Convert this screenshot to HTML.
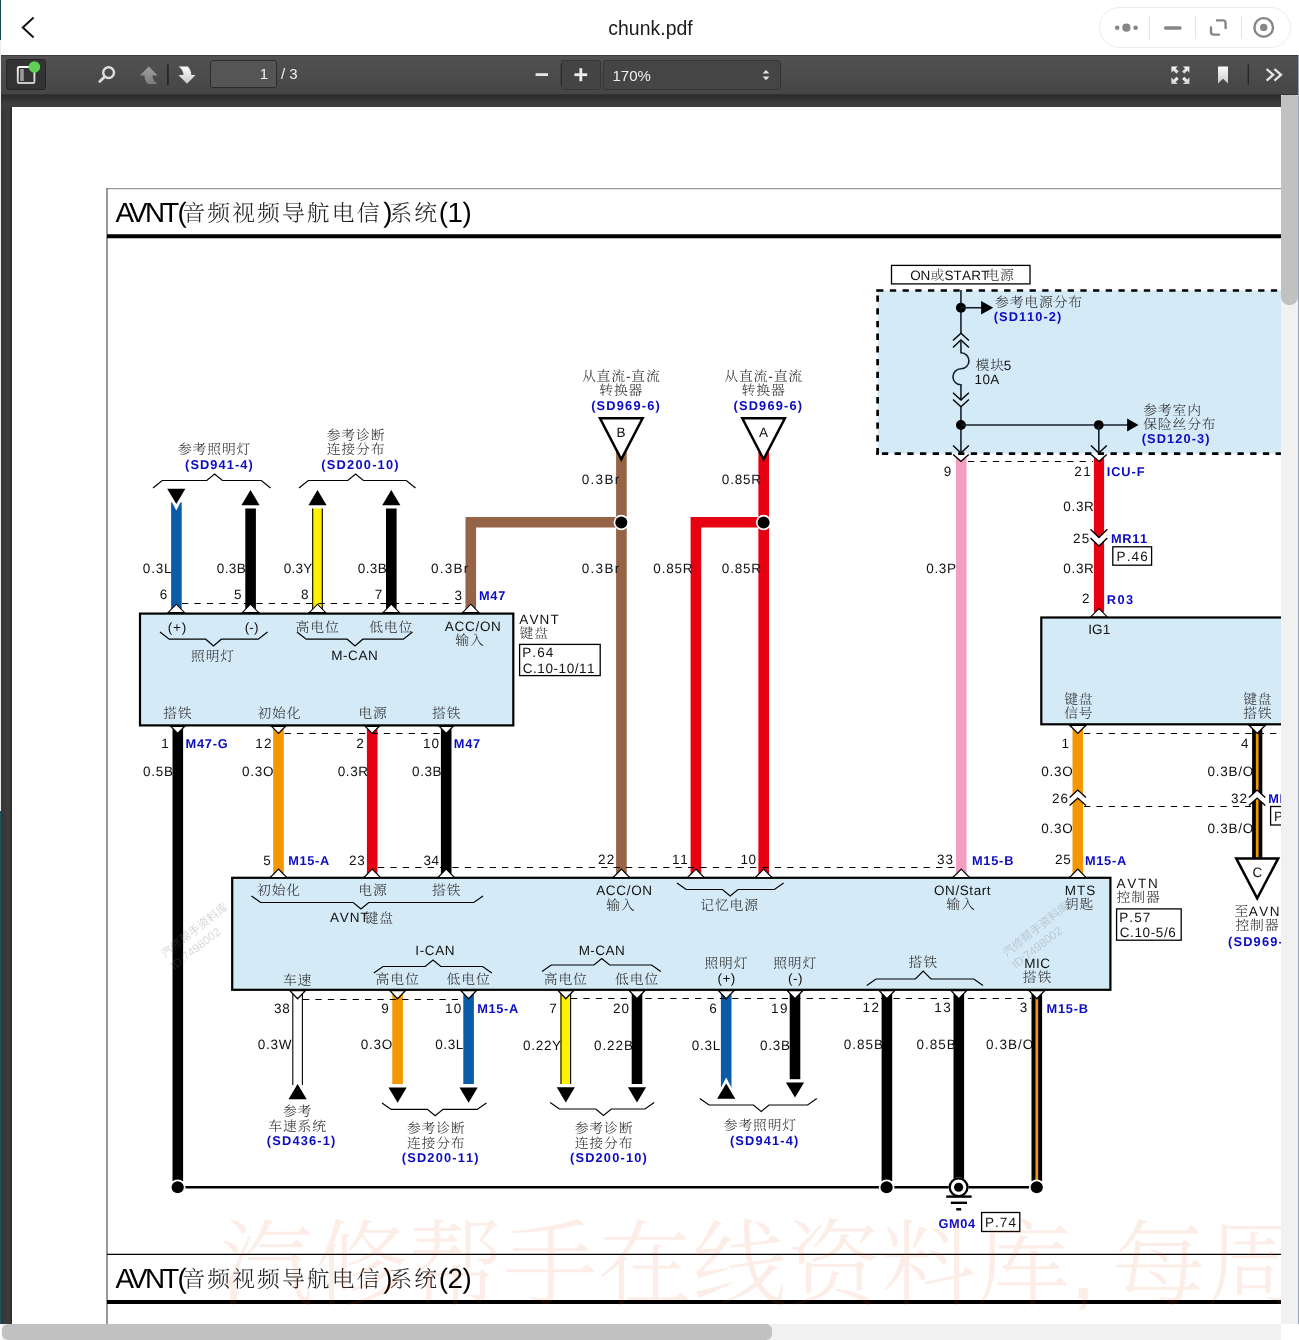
<!DOCTYPE html>
<html lang="zh-CN"><head><meta charset="utf-8"><title>chunk.pdf</title>
<style>
*{box-sizing:border-box}
html,body{margin:0;padding:0;background:#fff;width:1299px;height:1340px;overflow:hidden}
#root{position:absolute;left:0;top:0;width:1299px;height:1340px;will-change:transform;transform:translateZ(0)}
body{position:relative;font-family:"Liberation Sans", "Noto Sans CJK SC", sans-serif}
.abs{position:absolute}
#viewer{left:0;top:55px;width:1281px;height:1269px;background:linear-gradient(90deg,#353535 0,#3d3d3d 9px,#2c2c2c 12px,#2c2c2c)}
#edge{left:0;top:0;width:1px;height:1324px;background:linear-gradient(#1b4a56 0,#1b4a56 40px,#ececec 40px,#ececec 811px,#1e5560 811px)}
#page{left:12px;top:107px;width:1269px;height:1217px;background:#fff;overflow:hidden}
#page svg{position:absolute;left:-12px;top:-107px}
#shade{left:1px;top:95px;width:1280px;height:12px;background:linear-gradient(#2b2b2b,#3a3a3a 60%,#3f3f3f)}
#shade2{left:12px;top:105px;width:1269px;height:2px;background:linear-gradient(#3d3d3d,#1e1e1e)}
#tb{left:1px;top:55px;width:1298px;height:40px;background:linear-gradient(#515151,#464646);border-top:1px solid #3a3a3a;border-bottom:1px solid #343434}
#hdr{left:0;top:0;width:1299px;height:55px;background:#fff}
#ttl{left:1px;top:0.6px;width:1299px;text-align:center;font-size:19.4px;line-height:55px;color:#1a1a1a;letter-spacing:.05px}
#pill{left:1099px;top:7px;width:192px;height:41px;border:1px solid #ebebeb;border-radius:21px;background:#fff}
#vsb{left:1281px;top:95px;width:17px;height:1229px;background:#f1f1f1}
#vth{left:1281px;top:95px;width:17px;height:210px;background:#c1c1c1;border-radius:3px 3px 8px 8px}
#hsb{left:1px;top:1324px;width:1280px;height:16px;background:#f1f1f1}
#hth{left:2px;top:1324px;width:770px;height:16px;background:#c1c1c1;border-radius:6px}
#rstrip{left:1298px;top:55px;width:1px;height:1269px;background:#9fa3b0}
.tbtn{border:1px solid #2e2e2e;border-radius:2.5px;background:#3c3c3c}
.tbt{color:#f0f0f0;font-size:15px;line-height:16px;white-space:nowrap}
svg text{white-space:pre;text-rendering:geometricPrecision}
.l{font-family:"Liberation Sans", "Noto Sans CJK SC", sans-serif;font-size:13.5px;fill:#111;font-kerning:none}
.b{font-family:"Liberation Sans", "Noto Sans CJK SC", sans-serif;font-size:12.8px;font-weight:700;fill:#0c0cc2;font-kerning:none}
.c{font-family:"Liberation Sans", "Noto Serif CJK SC", serif;font-size:13.8px;font-weight:300;fill:#2a2a2a;letter-spacing:.85px}
.tl{font-family:"Liberation Sans", "Noto Sans CJK SC", sans-serif;font-size:27.8px;fill:#000}
.tc{font-family:"Liberation Sans", "Noto Serif CJK SC", serif;font-size:22.8px;font-weight:300;fill:#222;letter-spacing:2.1px}
.wm{font-family:"Liberation Sans", "Noto Serif CJK SC", serif;font-size:94.6px;font-weight:300;fill:#eb5514;opacity:.1}
.wms{font-family:"Liberation Sans","Noto Sans CJK SC",sans-serif;font-size:11.6px;fill:#707070;opacity:.28}
</style></head>
<body><div id="root">
<div id="viewer" class="abs"></div>
<div id="page" class="abs">
<svg width="1299" height="1340" viewBox="0 0 1299 1340">
<line x1="107.00" y1="188.70" x2="1282.00" y2="188.70" stroke="#9a9a9a" stroke-width="1.3" />
<line x1="107.00" y1="188.00" x2="107.00" y2="1330.00" stroke="#555" stroke-width="1.2" />
<line x1="107.00" y1="236.20" x2="1282.00" y2="236.20" stroke="#000" stroke-width="4" />
<line x1="107.00" y1="1254.40" x2="1282.00" y2="1254.40" stroke="#000" stroke-width="1.2" />
<line x1="107.00" y1="1302.00" x2="1282.00" y2="1302.00" stroke="#000" stroke-width="4" />
<rect x="877.60" y="290.50" width="422.40" height="163.20" fill="#d4eaf7" stroke="none" stroke-width="1" />
<rect x="140.00" y="613.60" width="373.30" height="111.80" fill="#d4eaf7" stroke="#000" stroke-width="2.2" />
<rect x="232.20" y="877.80" width="878.20" height="112.00" fill="#d4eaf7" stroke="#000" stroke-width="2.2" />
<rect x="1041.30" y="617.50" width="258.70" height="106.80" fill="#d4eaf7" stroke="#000" stroke-width="2.2" />
<rect x="171.10" y="502.40" width="10.60" height="107.60" fill="#0a5ca8" stroke="none" stroke-width="1" />
<polygon points="164.60,487.60 188.00,487.60 176.30,510.60" fill="#fff" stroke="none" stroke-width="1" />
<polygon points="167.20,488.80 185.40,488.80 176.30,504.00" fill="#000" stroke="none" stroke-width="1" />
<rect x="245.30" y="508.50" width="10.60" height="101.50" fill="#000" stroke="none" stroke-width="1" />
<polygon points="250.50,490.00 259.60,505.20 241.40,505.20" fill="#000" stroke="none" stroke-width="1" />
<rect x="312.20" y="508.50" width="10.60" height="101.50" fill="#fff100" stroke="none" stroke-width="1" />
<line x1="312.70" y1="508.50" x2="312.70" y2="610.00" stroke="#000" stroke-width="1.1" />
<line x1="322.30" y1="508.50" x2="322.30" y2="610.00" stroke="#000" stroke-width="1.1" />
<polygon points="317.50,490.00 326.60,505.20 308.40,505.20" fill="#000" stroke="none" stroke-width="1" />
<rect x="386.00" y="508.50" width="10.60" height="101.50" fill="#000" stroke="none" stroke-width="1" />
<polygon points="391.30,490.00 400.40,505.20 382.20,505.20" fill="#000" stroke="none" stroke-width="1" />
<path d="M470.8 610 V522.3 H621.4" fill="none" stroke="#956345" stroke-width="10.6"/>
<rect x="616.10" y="446.00" width="10.60" height="428.00" fill="#956345" stroke="none" stroke-width="1" />
<path d="M695.9 874 V522.3 H763.7" fill="none" stroke="#e60012" stroke-width="10.6"/>
<rect x="758.40" y="446.00" width="10.60" height="428.00" fill="#e60012" stroke="none" stroke-width="1" />
<rect x="955.95" y="455.00" width="10.60" height="419.00" fill="#f19ec2" stroke="none" stroke-width="1" />
<rect x="1093.90" y="455.00" width="10.20" height="157.00" fill="#e60012" stroke="none" stroke-width="1" />
<circle cx="621.30" cy="522.50" r="7.7" fill="#fff" stroke="none" stroke-width="1"/>
<circle cx="621.30" cy="522.50" r="6.0" fill="#000" stroke="none" stroke-width="1"/>
<circle cx="763.60" cy="522.50" r="7.7" fill="#fff" stroke="none" stroke-width="1"/>
<circle cx="763.60" cy="522.50" r="6.0" fill="#000" stroke="none" stroke-width="1"/>
<polygon points="952.75,453.60 969.15,453.60 960.95,461.30" fill="#fff" stroke="none" stroke-width="1" />
<polyline points="953.15,454.40 960.95,461.40 968.75,454.40" fill="none" stroke="#000" stroke-width="1.4" />
<polygon points="1090.75,453.60 1107.15,453.60 1098.95,461.30" fill="#fff" stroke="none" stroke-width="1" />
<polyline points="1091.15,454.40 1098.95,461.40 1106.75,454.40" fill="none" stroke="#000" stroke-width="1.4" />
<line x1="182.00" y1="603.50" x2="466.00" y2="603.50" stroke="#000" stroke-width="1.2" stroke-dasharray="6.3 6.1"/>
<polygon points="168.00,612.60 176.30,604.20 184.60,612.60" fill="#fff" stroke="#000" stroke-width="1.1" stroke-linejoin="miter"/>
<polygon points="242.20,612.60 250.50,604.20 258.80,612.60" fill="#fff" stroke="#000" stroke-width="1.1" stroke-linejoin="miter"/>
<polygon points="309.20,612.60 317.50,604.20 325.80,612.60" fill="#fff" stroke="#000" stroke-width="1.1" stroke-linejoin="miter"/>
<polygon points="383.00,612.60 391.30,604.20 399.60,612.60" fill="#fff" stroke="#000" stroke-width="1.1" stroke-linejoin="miter"/>
<polygon points="462.50,612.60 470.80,604.20 479.10,612.60" fill="#fff" stroke="#000" stroke-width="1.1" stroke-linejoin="miter"/>
<path d="M876.25 290.5 H1300" fill="none" stroke="#000" stroke-width="2.7" stroke-dasharray="6.3 6.4" stroke-dashoffset="-0.9"/>
<rect x="876.25" y="289.15" width="1.35" height="2.70" fill="#000" stroke="none" stroke-width="1" />
<path d="M877.6 453.7 H1300" fill="none" stroke="#000" stroke-width="2.7" stroke-dasharray="6.3 6.4" stroke-dashoffset="8.4"/>
<rect x="876.25" y="452.35" width="2.35" height="2.70" fill="#000" stroke="none" stroke-width="1" />
<path d="M877.6 289.2 V455" fill="none" stroke="#000" stroke-width="2.7" stroke-dasharray="6.3 6.4" stroke-dashoffset="6.4"/>
<polygon points="600.00,418.30 642.60,418.30 621.30,459.40" fill="#fff" stroke="#000" stroke-width="2.5" />
<text x="616.60" y="437" class="l" style="letter-spacing:0.50px">B</text>
<polygon points="742.30,418.30 784.90,418.30 763.60,459.40" fill="#fff" stroke="#000" stroke-width="2.5" />
<text x="759.10" y="437" class="l" style="letter-spacing:0.50px">A</text>
<rect x="172.50" y="727.00" width="10.60" height="454.00" fill="#000" stroke="none" stroke-width="1" />
<rect x="1072.50" y="727.00" width="10.60" height="147.00" fill="#f39800" stroke="none" stroke-width="1" />
<rect x="1252.10" y="727.00" width="10.20" height="132.00" fill="#000" stroke="none" stroke-width="1" />
<rect x="1255.85" y="727.00" width="2.70" height="132.00" fill="#f39800" stroke="none" stroke-width="1" />
<rect x="273.20" y="727.00" width="10.60" height="147.00" fill="#f39800" stroke="none" stroke-width="1" />
<rect x="366.90" y="727.00" width="10.60" height="147.00" fill="#e60012" stroke="none" stroke-width="1" />
<rect x="440.90" y="727.00" width="10.60" height="147.00" fill="#000" stroke="none" stroke-width="1" />
<line x1="284.60" y1="733.50" x2="440.00" y2="733.50" stroke="#000" stroke-width="1.2" stroke-dasharray="6.3 6.1"/>
<polygon points="170.80,726.40 177.70,733.40 184.60,726.40" fill="#fff" stroke="#000" stroke-width="1.3" />
<polygon points="271.60,726.40 278.50,733.40 285.40,726.40" fill="#fff" stroke="#000" stroke-width="1.3" />
<polygon points="365.30,726.40 372.20,733.40 379.10,726.40" fill="#fff" stroke="#000" stroke-width="1.3" />
<polygon points="439.30,726.40 446.20,733.40 453.10,726.40" fill="#fff" stroke="#000" stroke-width="1.3" />
<line x1="378.00" y1="867.50" x2="956.00" y2="867.50" stroke="#000" stroke-width="1.2" stroke-dasharray="6.3 6.1"/>
<polygon points="270.20,877.50 278.50,869.10 286.80,877.50" fill="#fff" stroke="#000" stroke-width="1.1" stroke-linejoin="miter"/>
<polygon points="363.90,877.50 372.20,869.10 380.50,877.50" fill="#fff" stroke="#000" stroke-width="1.1" stroke-linejoin="miter"/>
<polygon points="437.90,877.50 446.20,869.10 454.50,877.50" fill="#fff" stroke="#000" stroke-width="1.1" stroke-linejoin="miter"/>
<polygon points="613.10,877.50 621.40,869.10 629.70,877.50" fill="#fff" stroke="#000" stroke-width="1.1" stroke-linejoin="miter"/>
<polygon points="687.60,877.50 695.90,869.10 704.20,877.50" fill="#fff" stroke="#000" stroke-width="1.1" stroke-linejoin="miter"/>
<polygon points="755.40,877.50 763.70,869.10 772.00,877.50" fill="#fff" stroke="#000" stroke-width="1.1" stroke-linejoin="miter"/>
<polygon points="952.90,877.50 961.20,869.10 969.50,877.50" fill="#fff" stroke="#000" stroke-width="1.1" stroke-linejoin="miter"/>
<polygon points="1069.50,877.50 1077.80,869.10 1086.10,877.50" fill="#fff" stroke="#000" stroke-width="1.1" stroke-linejoin="miter"/>
<line x1="1084.00" y1="733.50" x2="1300.00" y2="733.50" stroke="#000" stroke-width="1.2" stroke-dasharray="6.3 6.1"/>
<polygon points="1069.70,725.30 1077.80,733.40 1085.90,725.30" fill="#fff" stroke="#000" stroke-width="1.3" />
<polygon points="1249.10,725.30 1257.20,733.40 1265.30,725.30" fill="#fff" stroke="#000" stroke-width="1.3" />
<polygon points="1090.70,616.90 1099.00,608.50 1107.30,616.90" fill="#fff" stroke="#000" stroke-width="1.1" stroke-linejoin="miter"/>
<line x1="1084.00" y1="806.50" x2="1251.00" y2="806.50" stroke="#000" stroke-width="1.2" stroke-dasharray="6.3 6.1"/>
<rect x="292.30" y="991.00" width="10.60" height="94.00" fill="#fff" stroke="none" stroke-width="1" />
<line x1="292.80" y1="991.00" x2="292.80" y2="1085.00" stroke="#000" stroke-width="1.1" />
<line x1="302.40" y1="991.00" x2="302.40" y2="1085.00" stroke="#000" stroke-width="1.1" />
<polygon points="297.60,1084.00 306.70,1099.20 288.50,1099.20" fill="#000" stroke="none" stroke-width="1" />
<rect x="392.30" y="991.00" width="10.60" height="93.00" fill="#f39800" stroke="none" stroke-width="1" />
<polygon points="388.50,1087.60 406.70,1087.60 397.60,1102.80" fill="#000" stroke="none" stroke-width="1" />
<rect x="463.30" y="991.00" width="10.60" height="93.00" fill="#0a5ca8" stroke="none" stroke-width="1" />
<polygon points="459.50,1087.60 477.70,1087.60 468.60,1102.80" fill="#000" stroke="none" stroke-width="1" />
<rect x="560.50" y="991.00" width="10.60" height="93.00" fill="#fff100" stroke="none" stroke-width="1" />
<line x1="561.00" y1="991.00" x2="561.00" y2="1084.00" stroke="#000" stroke-width="1.1" />
<line x1="570.60" y1="991.00" x2="570.60" y2="1084.00" stroke="#000" stroke-width="1.1" />
<polygon points="556.70,1087.30 574.90,1087.30 565.80,1102.50" fill="#000" stroke="none" stroke-width="1" />
<rect x="631.70" y="991.00" width="10.60" height="93.00" fill="#000" stroke="none" stroke-width="1" />
<polygon points="627.90,1087.30 646.10,1087.30 637.00,1102.50" fill="#000" stroke="none" stroke-width="1" />
<rect x="720.90" y="991.00" width="10.60" height="105.00" fill="#0a5ca8" stroke="none" stroke-width="1" />
<polygon points="726.20,1077.50 737.60,1099.60 714.80,1099.60" fill="#fff" stroke="none" stroke-width="1" />
<polygon points="726.20,1083.60 735.30,1098.80 717.10,1098.80" fill="#000" stroke="none" stroke-width="1" />
<rect x="789.70" y="991.00" width="10.60" height="88.20" fill="#000" stroke="none" stroke-width="1" />
<polygon points="785.90,1082.40 804.10,1082.40 795.00,1097.60" fill="#000" stroke="none" stroke-width="1" />
<rect x="881.60" y="991.00" width="10.60" height="190.00" fill="#000" stroke="none" stroke-width="1" />
<rect x="953.50" y="991.00" width="10.60" height="190.00" fill="#000" stroke="none" stroke-width="1" />
<rect x="1031.50" y="991.00" width="10.60" height="190.00" fill="#000" stroke="none" stroke-width="1" />
<rect x="1035.45" y="991.00" width="2.70" height="190.00" fill="#f39800" stroke="none" stroke-width="1" />
<line x1="303.00" y1="999.50" x2="463.00" y2="999.50" stroke="#000" stroke-width="1.2" stroke-dasharray="6.3 6.1"/>
<line x1="571.00" y1="998.50" x2="1031.00" y2="998.50" stroke="#000" stroke-width="1.2" stroke-dasharray="6.3 6.1"/>
<polygon points="289.80,990.60 297.60,998.70 305.40,990.60" fill="#fff" stroke="#000" stroke-width="1.3" />
<polygon points="389.80,990.60 397.60,998.70 405.40,990.60" fill="#fff" stroke="#000" stroke-width="1.3" />
<polygon points="460.80,990.60 468.60,998.70 476.40,990.60" fill="#fff" stroke="#000" stroke-width="1.3" />
<polygon points="558.00,990.60 565.80,998.70 573.60,990.60" fill="#fff" stroke="#000" stroke-width="1.3" />
<polygon points="629.20,990.60 637.00,998.70 644.80,990.60" fill="#fff" stroke="#000" stroke-width="1.3" />
<polygon points="718.40,990.60 726.20,998.70 734.00,990.60" fill="#fff" stroke="#000" stroke-width="1.3" />
<polygon points="787.20,990.60 795.00,998.70 802.80,990.60" fill="#fff" stroke="#000" stroke-width="1.3" />
<polygon points="879.10,990.60 886.90,998.70 894.70,990.60" fill="#fff" stroke="#000" stroke-width="1.3" />
<polygon points="951.00,990.60 958.80,998.70 966.60,990.60" fill="#fff" stroke="#000" stroke-width="1.3" />
<polygon points="1029.00,990.60 1036.80,998.70 1044.60,990.60" fill="#fff" stroke="#000" stroke-width="1.3" />
<line x1="177.60" y1="1187.25" x2="1036.60" y2="1187.25" stroke="#000" stroke-width="2.4" />
<circle cx="177.70" cy="1187.25" r="7.8" fill="#fff" stroke="none" stroke-width="1"/>
<circle cx="177.70" cy="1187.25" r="6.1" fill="#000" stroke="none" stroke-width="1"/>
<circle cx="886.60" cy="1187.25" r="7.8" fill="#fff" stroke="none" stroke-width="1"/>
<circle cx="886.60" cy="1187.25" r="6.1" fill="#000" stroke="none" stroke-width="1"/>
<circle cx="1036.75" cy="1187.25" r="7.8" fill="#fff" stroke="none" stroke-width="1"/>
<circle cx="1036.75" cy="1187.25" r="6.1" fill="#000" stroke="none" stroke-width="1"/>
<circle cx="958.60" cy="1187.25" r="10.0" fill="#fff" stroke="none" stroke-width="1"/>
<circle cx="958.60" cy="1187.25" r="8.9" fill="#fff" stroke="#000" stroke-width="2.3"/>
<circle cx="958.60" cy="1187.25" r="4.6" fill="#000" stroke="none" stroke-width="1"/>
<line x1="946.20" y1="1196.60" x2="971.60" y2="1196.60" stroke="#000" stroke-width="2.4" />
<line x1="950.80" y1="1202.80" x2="967.00" y2="1202.80" stroke="#000" stroke-width="2.4" />
<line x1="956.20" y1="1209.30" x2="961.20" y2="1209.30" stroke="#000" stroke-width="2.4" />
<line x1="960.95" y1="290.00" x2="960.95" y2="333.40" stroke="#16222c" stroke-width="1.6" />
<circle cx="960.95" cy="307.75" r="5.0" fill="#000" stroke="none" stroke-width="1"/>
<line x1="960.95" y1="307.75" x2="982.00" y2="307.75" stroke="#16222c" stroke-width="1.6" />
<polygon points="981.10,301.00 993.20,307.75 981.10,314.50" fill="#000" stroke="none" stroke-width="1" />
<polyline points="953.00,340.60 960.95,333.20 968.90,340.60" fill="none" stroke="#000" stroke-width="1.4" />
<polyline points="953.00,347.40 960.95,339.90 968.90,347.40" fill="none" stroke="#000" stroke-width="1.4" />
<path d="M960.95 340 V352.8 a8 8 0 0 1 0 16 a8 8 0 0 0 0 16 V400" fill="none" stroke="#16222c" stroke-width="1.6"/>
<polyline points="953.00,392.70 960.95,400.10 968.90,392.70" fill="none" stroke="#000" stroke-width="1.4" />
<polyline points="953.00,399.40 960.95,406.80 968.90,399.40" fill="none" stroke="#000" stroke-width="1.4" />
<line x1="960.95" y1="406.60" x2="960.95" y2="453.00" stroke="#16222c" stroke-width="1.6" />
<circle cx="960.95" cy="425.05" r="5.0" fill="#000" stroke="none" stroke-width="1"/>
<line x1="960.95" y1="425.05" x2="1128.00" y2="425.05" stroke="#16222c" stroke-width="1.6" />
<circle cx="1098.70" cy="425.05" r="4.9" fill="#000" stroke="none" stroke-width="1"/>
<polygon points="1127.10,418.50 1138.50,425.05 1127.10,431.60" fill="#000" stroke="none" stroke-width="1" />
<line x1="1098.80" y1="425.05" x2="1098.80" y2="453.00" stroke="#16222c" stroke-width="1.6" />
<polyline points="953.05,445.60 960.95,453.00 968.85,445.60" fill="none" stroke="#000" stroke-width="1.4" />
<polyline points="1090.95,445.60 1098.85,453.00 1106.75,445.60" fill="none" stroke="#000" stroke-width="1.4" />
<line x1="968.00" y1="461.50" x2="1093.00" y2="461.50" stroke="#000" stroke-width="1.2" stroke-dasharray="6.3 6.1"/>
<rect x="891.50" y="265.40" width="138.50" height="18.50" fill="#fff" stroke="#000" stroke-width="1.3" />
<polygon points="1090.30,529.30 1098.90,537.50 1107.50,529.30 1107.50,538.10 1098.90,546.10 1090.30,538.10" fill="#fff" stroke="none" stroke-width="1" />
<polyline points="1090.50,529.30 1098.90,537.50 1107.30,529.30" fill="none" stroke="#000" stroke-width="1.4" />
<polyline points="1090.50,538.10 1098.90,546.10 1107.30,538.10" fill="none" stroke="#000" stroke-width="1.4" />
<polygon points="1069.50,805.70 1077.80,798.10 1086.10,805.70 1086.10,797.60 1077.80,790.10 1069.50,797.60" fill="#fff" stroke="none" stroke-width="1" />
<polyline points="1069.60,805.60 1077.80,798.10 1086.00,805.60" fill="none" stroke="#000" stroke-width="1.4" />
<polyline points="1069.60,797.50 1077.80,790.10 1086.00,797.50" fill="none" stroke="#000" stroke-width="1.4" />
<polygon points="1248.80,805.70 1257.10,798.10 1265.40,805.70 1265.40,797.60 1257.10,790.10 1248.80,797.60" fill="#fff" stroke="none" stroke-width="1" />
<polyline points="1248.90,805.60 1257.10,798.10 1265.30,805.60" fill="none" stroke="#000" stroke-width="1.4" />
<polyline points="1248.90,797.50 1257.10,790.10 1265.30,797.50" fill="none" stroke="#000" stroke-width="1.4" />
<polygon points="1236.20,858.40 1278.20,858.40 1257.20,898.30" fill="#fff" stroke="#000" stroke-width="2.5" />
<text x="1252.44" y="877" class="l" style="letter-spacing:0.50px">C</text>
<rect x="519.60" y="644.40" width="80.60" height="31.20" fill="#fff" stroke="#000" stroke-width="1.3" />
<rect x="1112.80" y="546.80" width="38.80" height="18.40" fill="#fff" stroke="#000" stroke-width="1.3" />
<rect x="1116.60" y="908.90" width="64.60" height="31.30" fill="#fff" stroke="#000" stroke-width="1.3" />
<rect x="981.60" y="1212.50" width="38.20" height="19.00" fill="#fff" stroke="#000" stroke-width="1.3" />
<rect x="1270.60" y="806.50" width="29.40" height="18.50" fill="#fff" stroke="#000" stroke-width="1.3" />
<polyline points="153.00,488.00 162.20,480.50 206.80,480.50 214.60,474.00 222.40,480.50 261.30,480.50 270.50,488.00" fill="none" stroke="#000" stroke-width="1.2" />
<polyline points="299.00,488.00 308.20,480.50 347.80,480.50 355.60,474.00 363.40,480.50 406.30,480.50 415.50,488.00" fill="none" stroke="#000" stroke-width="1.2" />
<polyline points="160.00,632.00 169.20,639.20 205.70,639.20 213.50,646.00 221.30,639.20 258.30,639.20 267.50,632.00" fill="none" stroke="#000" stroke-width="1.2" />
<polyline points="297.00,632.00 306.20,639.20 347.20,639.20 355.00,646.00 362.80,639.20 403.30,639.20 412.50,632.00" fill="none" stroke="#000" stroke-width="1.2" />
<polyline points="251.50,896.00 260.70,902.50 353.20,902.50 361.00,909.00 368.80,902.50 473.80,902.50 483.00,896.00" fill="none" stroke="#000" stroke-width="1.2" />
<polyline points="677.00,883.00 686.20,889.50 722.40,889.50 730.20,896.00 738.00,889.50 774.40,889.50 783.60,883.00" fill="none" stroke="#000" stroke-width="1.2" />
<polyline points="373.80,973.00 383.00,966.50 425.20,966.50 433.00,960.00 440.80,966.50 482.60,966.50 491.80,973.00" fill="none" stroke="#000" stroke-width="1.2" />
<polyline points="542.00,971.50 551.20,965.00 594.00,965.00 601.80,958.60 609.60,965.00 651.60,965.00 660.80,971.50" fill="none" stroke="#000" stroke-width="1.2" />
<polyline points="866.80,985.60 876.00,979.00 915.40,979.00 923.20,971.00 931.00,979.00 973.80,979.00 983.00,985.60" fill="none" stroke="#000" stroke-width="1.2" />
<polyline points="382.00,1102.90 391.20,1109.40 427.40,1109.40 435.20,1115.80 443.00,1109.40 477.20,1109.40 486.40,1102.90" fill="none" stroke="#000" stroke-width="1.2" />
<polyline points="550.20,1102.60 559.40,1109.00 595.70,1109.00 603.50,1115.40 611.30,1109.00 645.00,1109.00 654.20,1102.60" fill="none" stroke="#000" stroke-width="1.2" />
<polyline points="699.80,1098.60 709.00,1105.00 753.40,1105.00 761.20,1111.50 769.00,1105.00 807.60,1105.00 816.80,1098.60" fill="none" stroke="#000" stroke-width="1.2" />
<text x="115.4" y="222" class="tl" style="letter-spacing:-2.75px">AVNT</text>
<text x="177.6" y="222" class="tl">(</text>
<text x="182.4" y="221.4" class="tc">音频视频导航电信</text>
<text x="383.2" y="222" class="tl">)</text>
<text x="389.4" y="221.4" class="tc">系统</text>
<text x="438.8" y="222" class="tl" style="letter-spacing:-0.5px">(1)</text>
<text x="115.4" y="1287.6" class="tl" style="letter-spacing:-2.75px">AVNT</text>
<text x="177.6" y="1287.6" class="tl">(</text>
<text x="182.4" y="1287.0" class="tc">音频视频导航电信</text>
<text x="383.2" y="1287.6" class="tl">)</text>
<text x="389.4" y="1287.0" class="tc">系统</text>
<text x="438.8" y="1287.6" class="tl" style="letter-spacing:-0.5px">(2)</text>
<text x="214.6" y="454" class="c" text-anchor="middle">参考照明灯</text>
<text x="185.06" y="469" class="b" style="letter-spacing:1.08px">(SD941-4)</text>
<text x="356.0" y="440" class="c" text-anchor="middle">参考诊断</text>
<text x="356.0" y="454" class="c" text-anchor="middle">连接分布</text>
<text x="321.36" y="469" class="b" style="letter-spacing:1.23px">(SD200-10)</text>
<text x="621.3" y="381" class="c" text-anchor="middle">从直流-直流</text>
<text x="621.3" y="395" class="c" text-anchor="middle">转换器</text>
<text x="591.16" y="410" class="b" style="letter-spacing:1.20px">(SD969-6)</text>
<text x="763.6" y="381" class="c" text-anchor="middle">从直流-直流</text>
<text x="763.6" y="395" class="c" text-anchor="middle">转换器</text>
<text x="733.46" y="410" class="b" style="letter-spacing:1.20px">(SD969-6)</text>
<text x="142.87" y="573" class="l" style="letter-spacing:0.77px">0.3L</text>
<text x="216.87" y="573" class="l" style="letter-spacing:0.36px">0.3B</text>
<text x="283.87" y="573" class="l" style="letter-spacing:0.22px">0.3Y</text>
<text x="357.87" y="573" class="l" style="letter-spacing:0.36px">0.3B</text>
<text x="430.97" y="573" class="l" style="letter-spacing:1.25px">0.3Br</text>
<text x="581.87" y="484" class="l" style="letter-spacing:1.25px">0.3Br</text>
<text x="581.87" y="573" class="l" style="letter-spacing:1.25px">0.3Br</text>
<text x="721.87" y="484" class="l" style="letter-spacing:0.78px">0.85R</text>
<text x="721.87" y="573" class="l" style="letter-spacing:0.78px">0.85R</text>
<text x="653.37" y="573" class="l" style="letter-spacing:0.78px">0.85R</text>
<text x="926.27" y="573" class="l" style="letter-spacing:0.62px">0.3P</text>
<text x="1063.27" y="511" class="l" style="letter-spacing:0.68px">0.3R</text>
<text x="1063.27" y="573" class="l" style="letter-spacing:0.68px">0.3R</text>
<text x="159.81" y="599" class="l" style="letter-spacing:0.50px">6</text>
<text x="233.96" y="599" class="l" style="letter-spacing:0.50px">5</text>
<text x="300.91" y="599" class="l" style="letter-spacing:0.50px">8</text>
<text x="374.81" y="599" class="l" style="letter-spacing:0.50px">7</text>
<text x="454.49" y="600" class="l" style="letter-spacing:0.50px">3</text>
<text x="478.94" y="600" class="b" style="letter-spacing:0.76px">M47</text>
<text x="943.77" y="476" class="l" style="letter-spacing:0.50px">9</text>
<text x="1074.32" y="476" class="l" style="letter-spacing:1.32px">21</text>
<text x="1106.74" y="476" class="b" style="letter-spacing:0.90px">ICU-F</text>
<text x="1072.92" y="543" class="l" style="letter-spacing:1.23px">25</text>
<text x="1110.94" y="543" class="b" style="letter-spacing:0.69px">MR11</text>
<text x="1116.49" y="561" class="l" style="letter-spacing:1.14px">P.46</text>
<text x="1081.92" y="603" class="l" style="letter-spacing:0.50px">2</text>
<text x="1106.84" y="604" class="b" style="letter-spacing:1.42px">R03</text>
<text x="1088.15" y="634" class="l" style="letter-spacing:0.22px">IG1</text>
<text x="167.66" y="632" class="l" style="letter-spacing:0.90px">(+)</text>
<text x="244.66" y="632" class="l" style="letter-spacing:0.19px">(-)</text>
<text x="213.0" y="661" class="c" text-anchor="middle">照明灯</text>
<text x="317.6" y="632" class="c" text-anchor="middle">高电位</text>
<text x="391.2" y="632" class="c" text-anchor="middle">低电位</text>
<text x="331.29" y="660" class="l" style="letter-spacing:0.54px">M-CAN</text>
<text x="444.77" y="631" class="l" style="letter-spacing:0.72px">ACC/ON</text>
<text x="470.0" y="645" class="c" text-anchor="middle">输入</text>
<text x="177.8" y="718" class="c" text-anchor="middle">搭铁</text>
<text x="279.4" y="718" class="c" text-anchor="middle">初始化</text>
<text x="373.0" y="718" class="c" text-anchor="middle">电源</text>
<text x="446.6" y="718" class="c" text-anchor="middle">搭铁</text>
<text x="519.37" y="624" class="l" style="letter-spacing:1.11px">AVNT</text>
<text x="519.6" y="638" class="c">键盘</text>
<text x="522.29" y="657" class="l" style="letter-spacing:1.08px">P.64</text>
<text x="522.71" y="673" class="l" style="letter-spacing:0.57px">C.10-10/11</text>
<text x="161.17" y="748" class="l" style="letter-spacing:0.50px">1</text>
<text x="185.54" y="748" class="b" style="letter-spacing:0.78px">M47-G</text>
<text x="255.37" y="748" class="l" style="letter-spacing:1.09px">12</text>
<text x="356.32" y="748" class="l" style="letter-spacing:0.50px">2</text>
<text x="422.97" y="748" class="l" style="letter-spacing:1.14px">10</text>
<text x="453.74" y="748" class="b" style="letter-spacing:0.76px">M47</text>
<text x="143.07" y="776" class="l" style="letter-spacing:0.69px">0.5B</text>
<text x="242.07" y="776" class="l" style="letter-spacing:0.70px">0.3O</text>
<text x="337.67" y="776" class="l" style="letter-spacing:0.61px">0.3R</text>
<text x="412.07" y="776" class="l" style="letter-spacing:0.56px">0.3B</text>
<text x="263.36" y="865" class="l" style="letter-spacing:0.50px">5</text>
<text x="288.14" y="865" class="b" style="letter-spacing:0.70px">M15-A</text>
<text x="348.92" y="865" class="l" style="letter-spacing:0.86px">23</text>
<text x="423.49" y="865" class="l" style="letter-spacing:0.49px">34</text>
<text x="597.92" y="864" class="l" style="letter-spacing:1.34px">22</text>
<text x="671.97" y="864" class="l" style="letter-spacing:0.67px">11</text>
<text x="740.57" y="864" class="l" style="letter-spacing:0.54px">10</text>
<text x="937.09" y="864" class="l" style="letter-spacing:0.89px">33</text>
<text x="971.94" y="865" class="b" style="letter-spacing:0.76px">M15-B</text>
<text x="1055.12" y="864" class="l" style="letter-spacing:0.63px">25</text>
<text x="1084.94" y="865" class="b" style="letter-spacing:0.70px">M15-A</text>
<text x="279.0" y="895" class="c" text-anchor="middle">初始化</text>
<text x="373.0" y="895" class="c" text-anchor="middle">电源</text>
<text x="446.6" y="895" class="c" text-anchor="middle">搭铁</text>
<text x="329.97" y="922" class="l" style="letter-spacing:0.84px">AVNT</text>
<text x="364.6" y="923" class="c">键盘</text>
<text x="596.17" y="895" class="l" style="letter-spacing:0.68px">ACC/ON</text>
<text x="620.8" y="910" class="c" text-anchor="middle">输入</text>
<text x="729.6" y="910" class="c" text-anchor="middle">记忆电源</text>
<text x="933.96" y="895" class="l" style="letter-spacing:0.59px">ON/Start</text>
<text x="961.0" y="909" class="c" text-anchor="middle">输入</text>
<text x="1064.69" y="895" class="l" style="letter-spacing:1.02px">MTS</text>
<text x="1079.6" y="909" class="c" text-anchor="middle">钥匙</text>
<text x="415.35" y="955" class="l" style="letter-spacing:0.60px">I-CAN</text>
<text x="578.69" y="955" class="l" style="letter-spacing:0.44px">M-CAN</text>
<text x="297.6" y="985" class="c" text-anchor="middle">车速</text>
<text x="397.6" y="984" class="c" text-anchor="middle">高电位</text>
<text x="468.6" y="984" class="c" text-anchor="middle">低电位</text>
<text x="565.8" y="984" class="c" text-anchor="middle">高电位</text>
<text x="637.0" y="984" class="c" text-anchor="middle">低电位</text>
<text x="726.4" y="968" class="c" text-anchor="middle">照明灯</text>
<text x="717.46" y="983" class="l" style="letter-spacing:0.50px">(+)</text>
<text x="795.2" y="968" class="c" text-anchor="middle">照明灯</text>
<text x="787.96" y="983" class="l" style="letter-spacing:0.50px">(-)</text>
<text x="923.2" y="967" class="c" text-anchor="middle">搭铁</text>
<text x="1024.23" y="968" class="l" style="letter-spacing:0.50px">MIC</text>
<text x="1037.4" y="982" class="c" text-anchor="middle">搭铁</text>
<text x="1116.57" y="888" class="l" style="letter-spacing:1.71px">AVTN</text>
<text x="1116.6" y="902" class="c">控制器</text>
<text x="1119.29" y="922" class="l" style="letter-spacing:1.07px">P.57</text>
<text x="1119.71" y="937" class="l" style="letter-spacing:0.61px">C.10-5/6</text>
<text x="1078.8" y="704" class="c" text-anchor="middle">键盘</text>
<text x="1078.8" y="718" class="c" text-anchor="middle">信号</text>
<text x="1257.8" y="704" class="c" text-anchor="middle">键盘</text>
<text x="1257.8" y="718" class="c" text-anchor="middle">搭铁</text>
<text x="1061.57" y="748" class="l" style="letter-spacing:0.50px">1</text>
<text x="1241.09" y="748" class="l" style="letter-spacing:0.50px">4</text>
<text x="1041.27" y="776" class="l" style="letter-spacing:0.70px">0.3O</text>
<text x="1207.47" y="776" class="l" style="letter-spacing:0.75px">0.3B/O</text>
<text x="1051.92" y="803" class="l" style="letter-spacing:1.06px">26</text>
<text x="1231.09" y="803" class="l" style="letter-spacing:0.98px">32</text>
<text x="1268.14" y="803" class="b" style="letter-spacing:0.69px">MR11</text>
<text x="1273.89" y="821" class="l" style="letter-spacing:1.14px">P.46</text>
<text x="1041.27" y="833" class="l" style="letter-spacing:0.70px">0.3O</text>
<text x="1207.47" y="833" class="l" style="letter-spacing:0.75px">0.3B/O</text>
<text x="1234.6" y="916" class="c">至</text>
<text x="1248.77" y="916" class="l" style="letter-spacing:1.44px">AVNT</text>
<text x="1257.4" y="930" class="c" text-anchor="middle">控制器</text>
<text x="1227.96" y="946" class="b" style="letter-spacing:1.20px">(SD969-6)</text>
<text x="910.36" y="280" class="l" style="letter-spacing:-0.31px">ON</text>
<text x="930.4" y="280" class="c">或</text>
<text x="944.39" y="280" class="l" style="letter-spacing:0.17px">START</text>
<text x="985.4" y="280" class="c">电源</text>
<text x="995.0" y="307" class="c">参考电源分布</text>
<text x="993.76" y="321" class="b" style="letter-spacing:1.05px">(SD110-2)</text>
<text x="975.6" y="370" class="c">模块</text>
<text x="1003.66" y="370" class="l" style="letter-spacing:0.50px">5</text>
<text x="974.57" y="384" class="l" style="letter-spacing:0.32px">10A</text>
<text x="1143.2" y="415" class="c">参考室内</text>
<text x="1143.2" y="429" class="c">保险丝分布</text>
<text x="1141.76" y="443" class="b" style="letter-spacing:1.10px">(SD120-3)</text>
<text x="273.89" y="1013" class="l" style="letter-spacing:0.88px">38</text>
<text x="381.37" y="1013" class="l" style="letter-spacing:0.50px">9</text>
<text x="444.97" y="1013" class="l" style="letter-spacing:1.34px">10</text>
<text x="477.14" y="1013" class="b" style="letter-spacing:0.70px">M15-A</text>
<text x="549.31" y="1013" class="l" style="letter-spacing:0.50px">7</text>
<text x="613.12" y="1013" class="l" style="letter-spacing:0.99px">20</text>
<text x="709.31" y="1013" class="l" style="letter-spacing:0.50px">6</text>
<text x="770.97" y="1013" class="l" style="letter-spacing:1.45px">19</text>
<text x="862.57" y="1012" class="l" style="letter-spacing:1.49px">12</text>
<text x="934.37" y="1012" class="l" style="letter-spacing:1.41px">13</text>
<text x="1019.69" y="1012" class="l" style="letter-spacing:0.50px">3</text>
<text x="1046.54" y="1013" class="b" style="letter-spacing:0.76px">M15-B</text>
<text x="257.87" y="1049" class="l" style="letter-spacing:0.69px">0.3W</text>
<text x="360.87" y="1049" class="l" style="letter-spacing:0.70px">0.3O</text>
<text x="435.27" y="1049" class="l" style="letter-spacing:0.57px">0.3L</text>
<text x="523.07" y="1050" class="l" style="letter-spacing:0.69px">0.22Y</text>
<text x="594.07" y="1050" class="l" style="letter-spacing:0.89px">0.22B</text>
<text x="691.87" y="1050" class="l" style="letter-spacing:0.70px">0.3L</text>
<text x="760.07" y="1050" class="l" style="letter-spacing:0.69px">0.3B</text>
<text x="843.87" y="1049" class="l" style="letter-spacing:0.99px">0.85B</text>
<text x="916.47" y="1049" class="l" style="letter-spacing:0.99px">0.85B</text>
<text x="986.07" y="1049" class="l" style="letter-spacing:1.03px">0.3B/O</text>
<text x="297.6" y="1116" class="c" text-anchor="middle">参考</text>
<text x="297.6" y="1131" class="c" text-anchor="middle">车速系统</text>
<text x="266.76" y="1145" class="b" style="letter-spacing:1.20px">(SD436-1)</text>
<text x="436.2" y="1133" class="c" text-anchor="middle">参考诊断</text>
<text x="436.2" y="1148" class="c" text-anchor="middle">连接分布</text>
<text x="401.76" y="1162" class="b" style="letter-spacing:1.19px">(SD200-11)</text>
<text x="604.0" y="1133" class="c" text-anchor="middle">参考诊断</text>
<text x="604.0" y="1148" class="c" text-anchor="middle">连接分布</text>
<text x="569.96" y="1162" class="b" style="letter-spacing:1.19px">(SD200-10)</text>
<text x="760.4" y="1130" class="c" text-anchor="middle">参考照明灯</text>
<text x="729.96" y="1145" class="b" style="letter-spacing:1.15px">(SD941-4)</text>
<text x="938.48" y="1228" class="b" style="letter-spacing:0.58px">GM04</text>
<text x="984.89" y="1227" class="l" style="letter-spacing:1.08px">P.74</text>
<g class="wm"><text x="219.2" y="1298">汽修帮手在线资料库</text><text x="1070" y="1298">,</text><text x="1111.7" y="1298">每周</text></g>
<g transform="translate(194.5,930.3) rotate(-38)" class="wms"><text x="-40.5" y="4">汽修帮手资料库</text><text x="-40.5" y="19">ID:7498002</text></g>
<g transform="translate(1036,929.2) rotate(-38)" class="wms"><text x="-40.5" y="4">汽修帮手资料库</text><text x="-40.5" y="19">ID:7498002</text></g>
</svg>
</div>
<div id="shade" class="abs"></div>

<div id="tb" class="abs"></div>
<div class="abs tbtn" style="left:6px;top:59px;width:40px;height:31px;background:#333;border-color:#252525"></div>
<div class="abs tbtn" style="left:210px;top:60px;width:67px;height:28px;background:#555;border-color:#2c2c2c"></div>
<div class="abs tbtn" style="left:561px;top:59.5px;width:39.5px;height:30px;background:#444;border-color:#353535"></div>
<div class="abs tbtn" style="left:603px;top:59.5px;width:178px;height:30px;background:#454545;border-color:#353535"></div>
<div class="abs tbt" style="left:240px;top:66px;width:28px;text-align:right">1</div>
<div class="abs tbt" style="left:281px;top:66px">/ 3</div>
<div class="abs tbt" style="left:612.5px;top:67.5px">170%</div>
<svg class="abs" style="left:0;top:55px" width="1299" height="40" viewBox="0 55 1299 40">
 <defs><linearGradient id="g1" x1="0" y1="0" x2="0" y2="1"><stop offset="0" stop-color="#fdfdfd"/><stop offset="1" stop-color="#c8c8c8"/></linearGradient>
 <linearGradient id="g2" x1="0" y1="0" x2="0" y2="1"><stop offset="0" stop-color="#a0a0a0"/><stop offset="1" stop-color="#7c7c7c"/></linearGradient></defs>
 <!-- sidebar toggle -->
 <rect x="17.8" y="67" width="16.6" height="16" rx="1.6" fill="none" stroke="url(#g1)" stroke-width="1.9"/>
 <rect x="20.2" y="69" width="3.6" height="12" fill="#9a9a9a"/>
 <circle cx="34.4" cy="67" r="5.8" fill="#5fd255"/>
 <!-- search -->
 <circle cx="108.6" cy="72.6" r="5.4" fill="none" stroke="#dedede" stroke-width="2.4"/>
 <line x1="104.6" y1="76.8" x2="99.8" y2="81.4" stroke="#dedede" stroke-width="2.8" stroke-linecap="round"/>
 <!-- up arrow (disabled) -->
 <path d="M148.8 66.6 L157.8 75.4 H152.6 Q152.4 80.6 157.4 84 H148 Q144.4 80.6 144.6 75.4 H139.8 Z" fill="url(#g2)"/>
 <line x1="167.9" y1="64.4" x2="167.9" y2="85" stroke="#262626" stroke-width="1.7"/>
 <!-- down arrow -->
 <path d="M187 83.8 L178.4 75 H183.4 Q183.6 70 178.8 66.4 H187.8 Q191.4 70 191.2 75 H195.6 Z" fill="url(#g1)"/>
 <!-- minus / plus -->
 <line x1="535.6" y1="74.6" x2="548" y2="74.6" stroke="#e6e6e6" stroke-width="2.8"/>
 <line x1="561.2" y1="64.4" x2="561.2" y2="85" stroke="#2c2c2c" stroke-width="1.2"/>
 <line x1="574.4" y1="74.7" x2="587.2" y2="74.7" stroke="#eee" stroke-width="2.8"/>
 <line x1="580.8" y1="68.2" x2="580.8" y2="81.2" stroke="#eee" stroke-width="2.8"/>
 <path d="M762.6 73.6 L766 70 L769.4 73.6 Z M762.6 76.6 L766 80.2 L769.4 76.6 Z" fill="#e4e4e4"/>
 <!-- presentation mode -->
 <g fill="url(#g1)">
  <path d="M1171.4 66.4 h6.4 l-2.1 2.1 3 3 -2.2 2.2 -3 -3 -2.1 2.1z"/>
  <path d="M1189.4 66.4 v6.4 l-2.1 -2.1 -3 3 -2.2 -2.2 3 -3 -2.1 -2.1z"/>
  <path d="M1171.4 84 v-6.4 l2.1 2.1 3 -3 2.2 2.2 -3 3 2.1 2.1z"/>
  <path d="M1189.4 84 h-6.4 l2.1 -2.1 -3 -3 2.2 -2.2 3 3 2.1 -2.1z"/>
  <path d="M1218 66.4 h10 v17.2 l-5 -4.8 -5 4.8z"/>
 </g>
 <line x1="1248.3" y1="64.6" x2="1248.3" y2="84.8" stroke="#262626" stroke-width="1.4"/>
 <g fill="none" stroke="#e6e6e6" stroke-width="2.3"><polyline points="1266.6,69 1273.2,74.8 1266.6,80.6"/><polyline points="1274.4,69 1281,74.8 1274.4,80.6"/></g>
</svg>


<div id="hdr" class="abs">
 <div id="ttl" class="abs">chunk.pdf</div>
 <svg class="abs" style="left:0;top:0" width="60" height="55" viewBox="0 0 60 55"><polyline points="33.6,17.6 22.8,27.6 33.6,37.4" fill="none" stroke="#111" stroke-width="2"/></svg>
 <div id="pill" class="abs"></div>
 <svg class="abs" style="left:1099px;top:0" width="200" height="55" viewBox="1099 0 200 55">
  <g fill="#868686"><circle cx="1117.2" cy="27.7" r="2.3"/><circle cx="1126.4" cy="27.7" r="4.1"/><circle cx="1135.6" cy="27.7" r="2.3"/></g>
  <g stroke="#e4e4e4" stroke-width="1"><line x1="1149.5" y1="16" x2="1149.5" y2="39"/><line x1="1195.5" y1="16" x2="1195.5" y2="39"/><line x1="1241.5" y1="16" x2="1241.5" y2="39"/></g>
  <line x1="1165.6" y1="28" x2="1180" y2="28" stroke="#868686" stroke-width="3.4" stroke-linecap="round"/>
  <g fill="none" stroke="#868686" stroke-width="2.4" stroke-linecap="round" stroke-linejoin="round">
   <path d="M1217 20.4 H1223 Q1225.6 20.4 1225.6 23 V28"/>
   <path d="M1211 27.4 V32 Q1211 34.6 1213.6 34.6 H1219"/>
   <circle cx="1263.7" cy="27.4" r="9.3"/>
  </g>
  <circle cx="1263.7" cy="27.4" r="3.7" fill="#868686"/>
 </svg>
</div>

<div id="vsb" class="abs"></div><div id="vth" class="abs"></div>
<div id="rstrip" class="abs"></div>
<div id="hsb" class="abs"></div><div id="hth" class="abs"></div>
<div id="edge" class="abs"></div>
</div></body></html>
